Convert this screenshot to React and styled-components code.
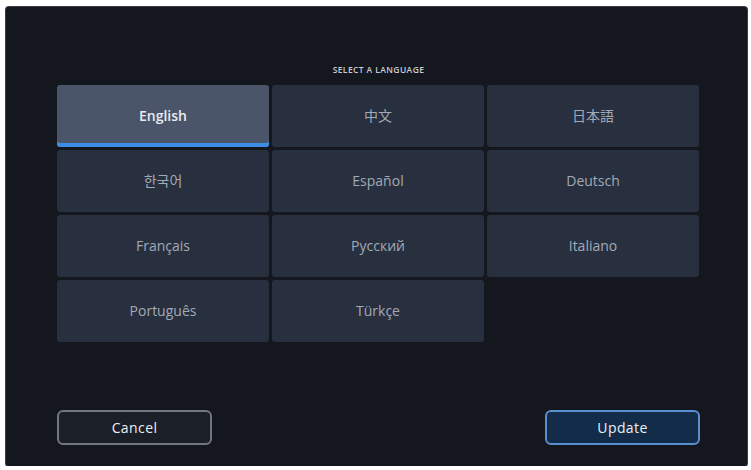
import React, { useState } from 'react'
import styled, { createGlobalStyle } from 'styled-components'

const GlobalStyle = createGlobalStyle`
    html, body {
        margin: 0;
        padding: 0;
        background: #ffffff;
    }
    body {
        font-family: "Open Sans", "Noto Sans", "Noto Sans CJK SC", sans-serif;
    }
`;

const languages = [
    { label: 'English' },
    { label: '中文', font: '"Noto Sans CJK SC"' },
    { label: '日本語', font: '"Noto Sans CJK JP"' },
    { label: '한국어', font: '"Noto Sans CJK KR"' },
    { label: 'Español' },
    { label: 'Deutsch' },
    { label: 'Français' },
    { label: 'Русский' },
    { label: 'Italiano' },
    { label: 'Português' },
    { label: 'Türkçe' },
];

export default function App() {
    const [selected, setSelected] = useState('English');
    return (
        <>
            <GlobalStyle />
            <Panel>
                <Title>SELECT A LANGUAGE</Title>
                <LangGrid>
                    {languages.map((l) => (
                        <LangCell
                            key={l.label}
                            $active={selected === l.label}
                            $font={l.font}
                            onClick={() => setSelected(l.label)}
                        >
                            {l.label}
                        </LangCell>
                    ))}
                </LangGrid>
                <Footer>
                    <ActionButton>Cancel</ActionButton>
                    <ActionButton $primary>Update</ActionButton>
                </Footer>
            </Panel>
        </>
    )
}

const Panel = styled.div`
    box-sizing: border-box;
    margin: 7px 0 0 6px;
    width: 741px;
    height: 459px;
    background: #14171e;
    border-radius: 3px;
    box-shadow: 0 0 0 1px #3a3d44;
    padding: 57px 47px 21px 51px;
    display: flex;
    flex-direction: column;
`;

const Title = styled.div`
    text-align: center;
    font-size: 8.5px;
    line-height: 12px;
    font-weight: 600;
    letter-spacing: 0.4px;
    color: #c9cdd4;
    margin-bottom: 9px;
`;

const LangGrid = styled.div`
    display: grid;
    grid-template-columns: repeat(3, 212px);
    grid-auto-rows: 62px;
    gap: 3px;
`;

const LangCell = styled.button`
    position: relative;
    border: none;
    margin: 0;
    padding: 0;
    border-radius: 3px;
    cursor: pointer;
    background: ${(p) => (p.$active ? '#4a5569' : '#282f3f')};
    color: ${(p) => (p.$active ? '#e8ebef' : '#a2aab6')};
    font-family: ${(p) => (p.$font ? `${p.$font}, "Open Sans", sans-serif` : '"Open Sans", "Noto Sans", sans-serif')};
    font-size: 14px;
    font-weight: ${(p) => (p.$active ? 600 : 400)};
    padding-bottom: 2px;
    box-shadow: ${(p) => (p.$active ? 'inset 0 -4px 0 #3b8de6' : 'none')};
`;

const Footer = styled.div`
    margin-top: auto;
    display: flex;
    justify-content: space-between;
`;

const ActionButton = styled.button`
    box-sizing: border-box;
    width: 155px;
    height: 35px;
    border-radius: 6px;
    border: 2px solid ${(p) => (p.$primary ? '#5a8fcf' : '#71767f')};
    background: ${(p) => (p.$primary ? '#132c4a' : '#1b1f27')};
    color: #eef0f3;
    font-family: "Open Sans", "Noto Sans", sans-serif;
    font-size: 14px;
    font-weight: 500;
    letter-spacing: 0.4px;
    cursor: pointer;
`;
